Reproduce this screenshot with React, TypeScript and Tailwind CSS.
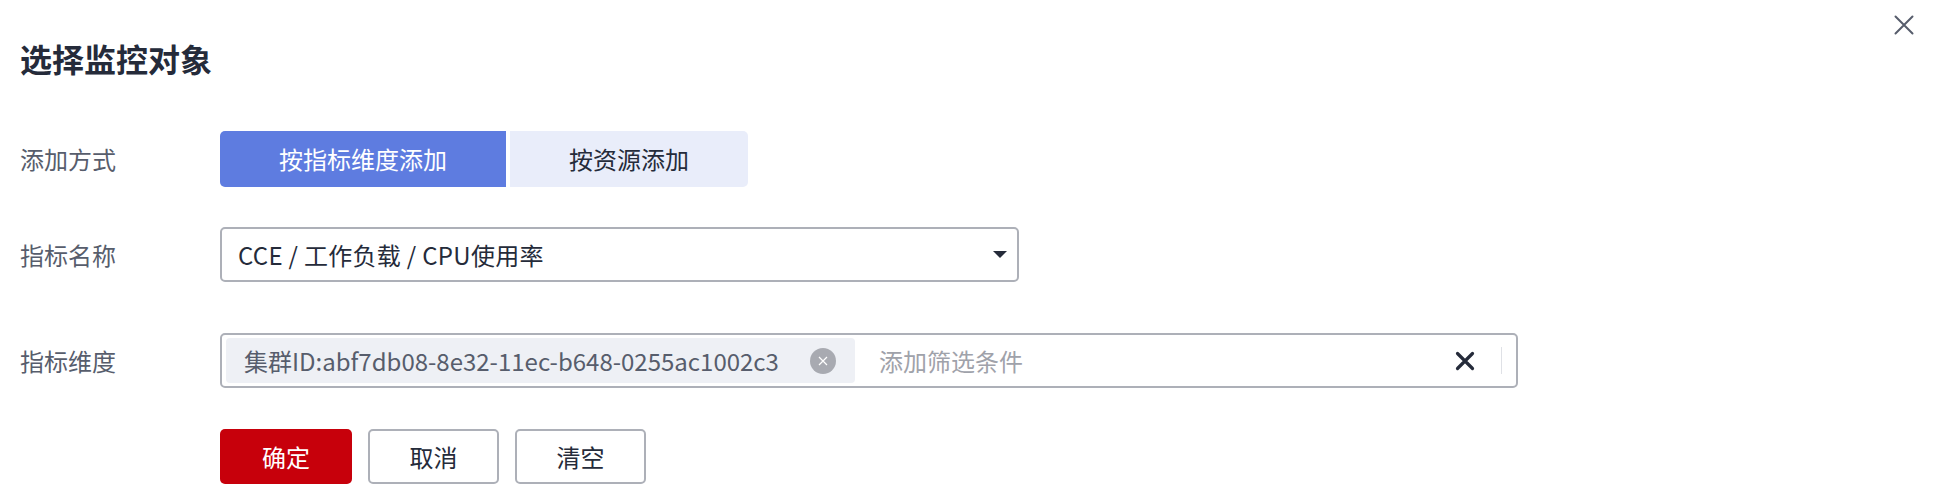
import React from "react";

const labelCls =
  "w-[200px] shrink-0 text-[24px] leading-none text-[#575d6c]";

const FormRow = ({
  label,
  className,
  children,
}: {
  label: string;
  className: string;
  children: React.ReactNode;
}) => (
  <div className={`flex items-center ${className}`}>
    <div className={labelCls}>{label}</div>
    {children}
  </div>
);

export default function App() {
  return (
    <div className="relative w-[1941px] h-[496px] bg-white font-['Noto_Sans_CJK_SC',sans-serif] text-[#252b3a]">
      <button className="absolute right-[27px] top-[15px] w-[20px] h-[20px] text-[#575d6c]">
        <svg viewBox="0 0 20 20" width="20" height="20" fill="none">
          <path
            d="M1.5 1.5 L18.5 18.5 M18.5 1.5 L1.5 18.5"
            stroke="currentColor"
            strokeWidth="2"
            strokeLinecap="round"
          />
        </svg>
      </button>

      <div className="pl-5 pt-[34px]">
        <h1 className="h-[48px] leading-[48px] text-[32px] font-bold text-[#252b3a]">
          选择监控对象
        </h1>

        <FormRow label="添加方式" className="mt-[49px] h-[56px]">
          <div className="flex gap-[4px]">
            <button className="w-[286px] h-[56px] rounded-l-[5px] bg-[#5e7ce0] text-white text-[24px]">
              按指标维度添加
            </button>
            <button className="w-[238px] h-[56px] rounded-r-[5px] bg-[#e9edfa] text-[#252b3a] text-[24px]">
              按资源添加
            </button>
          </div>
        </FormRow>

        <FormRow label="指标名称" className="mt-[40px] h-[55px]">
          <div className="flex items-center justify-between w-[799px] h-[55px] border-2 border-[#adb0b8] rounded-[5px] pl-[16px] pr-[10px]">
            <span className="text-[24px] tracking-[0.3px]">CCE / 工作负载 / CPU使用率</span>
            <svg viewBox="0 0 14 8" width="14" height="8">
              <path d="M0 0 L14 0 L7 7 Z" fill="#252b3a" />
            </svg>
          </div>
        </FormRow>

        <FormRow label="指标维度" className="mt-[51px] h-[55px]">
          <div className="flex items-center w-[1298px] h-[55px] border-2 border-[#adb0b8] rounded-[5px] pl-[4px] pr-[14px]">
            <div className="flex items-center h-[45px] rounded-[4px] bg-[#eef0f5] pl-[18px] pr-[19px]">
              <span className="text-[24px] text-[#575d6c]">
                集群ID:abf7db08-8e32-11ec-b648-0255ac1002c3
              </span>
              <span className="ml-[31px] flex items-center justify-center w-[26px] h-[26px] rounded-full bg-[#a8aab1]">
                <svg viewBox="0 0 12 12" width="12" height="12" fill="none">
                  <path
                    d="M2 2 L10 10 M10 2 L2 10"
                    stroke="white"
                    strokeWidth="1.2"
                  />
                </svg>
              </span>
            </div>
            <span className="ml-[24px] flex-1 text-[24px] text-[#9fa2aa]">
              添加筛选条件
            </span>
            <svg viewBox="0 0 20 20" width="20" height="20" fill="none">
              <path
                d="M2.5 2.5 L17.5 17.5 M17.5 2.5 L2.5 17.5"
                stroke="#252b3a"
                strokeWidth="3.2"
                strokeLinecap="round"
              />
            </svg>
            <span className="ml-[26px] w-px h-[27px] bg-[#dfe1e6]" />
          </div>
        </FormRow>

        <div className="flex gap-[16px] mt-[41px] pl-[200px]">
          <button className="w-[132px] h-[55px] rounded-[5px] bg-[#c7000b] text-white text-[24px]">
            确定
          </button>
          <button className="w-[131px] h-[55px] rounded-[5px] border-2 border-[#adb0b8] bg-white text-[#252b3a] text-[24px]">
            取消
          </button>
          <button className="w-[131px] h-[55px] rounded-[5px] border-2 border-[#adb0b8] bg-white text-[#252b3a] text-[24px]">
            清空
          </button>
        </div>
      </div>
    </div>
  );
}
